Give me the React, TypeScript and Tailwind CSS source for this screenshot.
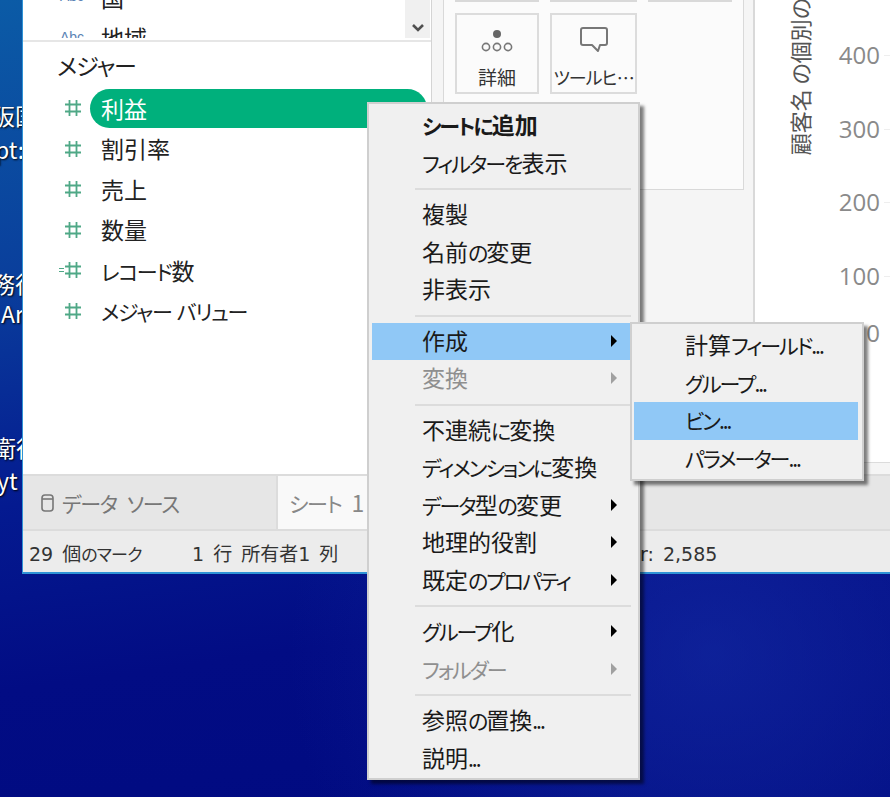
import React from "react";

const jp = "font-['Noto_Sans_CJK_JP','Liberation_Sans',sans-serif] [font-feature-settings:'palt']";
const status = "font-['DejaVu_Sans','Noto_Sans_CJK_JP',sans-serif] [font-feature-settings:'palt']";
const desk = "absolute text-[23px] leading-[30px] text-white [text-shadow:1px_1px_2px_#000]";

const measures = ["利益", "割引率", "売上", "数量", "レコード数", "メジャー バリュー"];

type Item = { label?: string; bold?: boolean; arrow?: boolean; off?: boolean; on?: boolean; sep?: boolean };

const menu: Item[] = [
  { label: "シートに追加", bold: true },
  { label: "フィルターを表示" },
  { sep: true },
  { label: "複製" },
  { label: "名前の変更" },
  { label: "非表示" },
  { sep: true },
  { label: "作成", arrow: true, on: true },
  { label: "変換", arrow: true, off: true },
  { sep: true },
  { label: "不連続に変換" },
  { label: "ディメンションに変換" },
  { label: "データ型の変更", arrow: true },
  { label: "地理的役割", arrow: true },
  { label: "既定のプロパティ", arrow: true },
  { sep: true },
  { label: "グループ化", arrow: true },
  { label: "フォルダー", arrow: true, off: true },
  { sep: true },
  { label: "参照の置換..." },
  { label: "説明..." },
];

const subMenu = ["計算フィールド...", "グループ...", "ビン...", "パラメーター..."];

// the original UI font has much narrower kana than kanji, so kana runs get tightened
function Narrow({ text, kana = "text-[21px] tracking-[-2px]" }: { text: string; kana?: string }) {
  const parts = text.split(/([\u3040-\u30ff.]+)/);
  return (
    <>
      {parts.map((p, i) => (i % 2 === 1 ? <span key={i} className={kana}>{p}</span> : <span key={i}>{p}</span>))}
    </>
  );
}

function HashIcon() {
  return (
    <svg width="16" height="16" viewBox="0 0 16 16" fill="none" stroke="#4fa886" strokeWidth="1.8">
      <path d="M4.5 0v16M11.5 0v16M0 4.5h16M0 11.5h16" />
    </svg>
  );
}

function MenuArrow({ off }: { off?: boolean }) {
  return (
    <svg width="8" height="12" viewBox="0 0 8 12" className="absolute left-[238px] top-[12px]">
      <path d="M1 0l6 6-6 6z" fill={off ? "#a0a0a0" : "#000000"} />
    </svg>
  );
}

export default function App() {
  return (
    <div className={`relative w-[890px] h-[797px] overflow-hidden bg-[radial-gradient(ellipse_at_80%_82%,rgba(24,50,170,0.55),transparent_42%),linear-gradient(172deg,#0b5ba6_0%,#0a3f9c_30%,#041a90_55%,#020c84_75%,#000a80_100%)] ${jp}`}>
      {/* desktop icon labels behind the window */}
      <div className={`${desk} left-[-8px] top-[100px]`}>阪国</div>
      <div className={`${desk} left-[-5px] top-[134px]`}>pt:</div>
      <div className={`${desk} left-[-8px] top-[268px]`}>務行</div>
      <div className={`${desk} left-[1px] top-[298px]`}>Ar</div>
      <div className={`${desk} left-[-7px] top-[432px]`}>衛行</div>
      <div className={`${desk} left-[-3px] top-[465px]`}>yt</div>

      {/* app window */}
      <div className="absolute left-[22px] top-0 right-0 h-[574px] flex flex-col border-l border-b-2 border-[#2f93d6] bg-white">
        <div className="flex h-[474px] shrink-0">
          {/* data pane */}
          <div className="w-[409px] shrink-0 border-r border-[#d4d4d4] bg-white">
            <div className="flex h-[38px] overflow-hidden">
              <div className="flex-1 mt-[-23.5px]">
                {["国", "地域"].map((d) => (
                  <div key={d} className="flex items-center h-[40.5px] text-[23px] text-[#222]">
                    <span className="w-[37px] ml-[37px] text-[14px] text-[#5a82b4] font-['Liberation_Sans',sans-serif]">Abc</span>
                    <span className="ml-[4px]">{d}</span>
                  </div>
                ))}
              </div>
              <div className="w-[25px] mr-[1px] bg-[#f0f0f0] flex items-end justify-center pb-[3px]">
                <svg width="14" height="14" viewBox="0 0 14 14" fill="none" stroke="#505050" strokeWidth="2.6">
                  <path d="M2 4l5 5 5-5" />
                </svg>
              </div>
            </div>
            <div className="h-[4px] border-b-2 border-[#e6e6e6]" />
            <div className="h-[46px] pl-[34px] flex items-center text-[23px] tracking-[-1px] text-[#222]">メジャー</div>
            {measures.map((m, i) => (
              <div key={m} className="flex items-center h-[40.5px]">
                <div className="w-[67px] pr-[9px] flex items-center justify-end">
                  {m === "レコード数" && <span className="w-[5px] h-[4px] mr-[1px] border-y border-[#4fa886]" />}
                  <HashIcon />
                </div>
                <div className={`flex items-baseline whitespace-pre w-[337px] h-[39px] px-[11px] rounded-full text-[23px] leading-[39px] ${i === 0 ? "bg-[#00b07c] text-white" : "text-[#222]"}`}>
                  <span><Narrow text={m} kana="text-[21px] tracking-[-1.3px]" /></span>
                </div>
              </div>
            ))}
          </div>

          {/* shelves */}
          <div className="w-[323px] shrink-0 border-r-2 border-[#d9d9d9] bg-[#f5f5f5] pl-[11px]">
            <div className="w-[301px] h-[190px] border-x border-b border-[#d9d9d9] bg-[#fbfbfb] pl-[11px]">
              <div className="flex gap-[11px] h-[2px]">
                <div className="w-[84px] border-b-2 border-[#d9d9d9]" />
                <div className="w-[87px] border-b-2 border-[#d9d9d9]" />
                <div className="w-[84px] border-b-2 border-[#d9d9d9]" />
              </div>
              <div className="flex gap-[11px] mt-[11px]">
                <div className="w-[84px] h-[81px] border-2 border-[#dcdcdc] flex flex-col items-center">
                  <svg width="34" height="26" viewBox="0 0 34 26" className="mt-[13px]" fill="none" stroke="#777" strokeWidth="1.6">
                    <circle cx="17" cy="6" r="4" fill="#666" stroke="none" />
                    <circle cx="6" cy="19" r="3.6" />
                    <circle cx="17" cy="19" r="3.6" />
                    <circle cx="28" cy="19" r="3.6" />
                  </svg>
                  <span className="mt-[9px] text-[19px] leading-[28px] text-[#333]">詳細</span>
                </div>
                <div className="w-[87px] h-[81px] border-2 border-[#dcdcdc] flex flex-col items-center">
                  <svg width="30" height="28" viewBox="0 0 30 28" className="mt-[11px]" fill="none" stroke="#777" strokeWidth="2" strokeLinejoin="round">
                    <path d="M4 2h22a2 2 0 0 1 2 2v13a2 2 0 0 1-2 2h-5l-2 6-6-6H4a2 2 0 0 1-2-2V4a2 2 0 0 1 2-2z" />
                  </svg>
                  <span className="mt-[9px] text-[18px] leading-[28px] tracking-[-1px] text-[#333] whitespace-nowrap">ツールヒ…</span>
                </div>
              </div>
            </div>
          </div>

          {/* view */}
          <div className="flex-1 min-w-0 flex flex-col bg-[#f5f5f5]">
            <div className="h-[463px] border-b border-[#dcdcdc] bg-white flex overflow-hidden">
              <div className="w-[58px] h-[155px] flex items-end justify-center pl-[29px] shrink-0">
                <span className="[writing-mode:vertical-rl] [text-orientation:sideways] rotate-180 text-[22px] leading-[26px] text-[#555] whitespace-nowrap">顧客名 の個別の数</span>
              </div>
              <div className="w-[67px] shrink-0 pt-[38px] text-right text-[24px] leading-[34px] text-[#8a8a8a] font-['Open_Sans',sans-serif]">
                <div className="h-[73.5px]">400</div>
                <div className="h-[73.5px]">300</div>
                <div className="h-[73.5px]">200</div>
                <div className="h-[57px]">100</div>
                <div>0</div>
              </div>
              <div className="pt-[38px] pl-[4px] w-[10px] shrink-0">
                {[0, 1, 2, 3].map((t) => (
                  <div key={t} className="h-[73.5px] pt-[17px]">
                    <div className="h-px bg-[#eeeeee]" />
                  </div>
                ))}
              </div>
            </div>
          </div>
        </div>

        {/* tabs */}
        <div className="flex h-[57px] shrink-0 border-t-2 border-b-2 border-[#dcdcdc] bg-[#e6e6e6] text-[23px] text-[#777] [word-spacing:5px]">
          <div className="w-[255px] border-r-2 border-[#dcdcdc] flex items-center pl-[18px] whitespace-pre">
            <svg width="13" height="18" viewBox="0 0 13 18" fill="none" stroke="#777" strokeWidth="1.6" className="mr-[8px]">
              <rect x="1" y="1" width="11" height="16" rx="3" />
              <path d="M1 5h11" />
            </svg>
            <span><Narrow text="データ ソース" kana="text-[21px] tracking-[-1.3px]" /></span>
          </div>
          <div className="w-[362px] bg-[#f9f9f9] flex items-center pl-[11px] text-[#888] whitespace-pre">
            <span><Narrow text="シート 1" kana="text-[21px] tracking-[-1.3px]" /></span>
          </div>
        </div>

        {/* status bar */}
        <div className={`flex-1 flex items-center pt-[5px] bg-[#ececec] text-[19px] text-[#333] [word-spacing:3px] ${status}`}>
          <span className="ml-[6px] w-[163px] whitespace-pre"><Narrow text="29 個のマーク" kana="text-[17px] tracking-[-0.8px]" /></span>
          <span className="w-[448px] whitespace-pre">1 行 所有者1 列</span>
          <span>r: 2,585</span>
        </div>
      </div>

      {/* context menu */}
      <div className="absolute left-[367px] top-[102px] w-[273px] pt-[3px] pb-[1px] border-2 border-[#cfcfcf] bg-[#f0f0f0] shadow-[4px_4px_3px_rgba(0,0,0,0.5)] text-[23px] text-[#1a1a1a]">
        {menu.map((item, i) =>
          item.sep ? (
            <div key={i} className="h-[14px] flex items-center pl-[46px] pr-[7px]">
              <div className="w-full h-[2px] bg-[#dcdcdc]" />
            </div>
          ) : (
            <div
              key={i}
              className={`relative flex items-baseline h-[37.5px] leading-[35px] ml-[3px] pl-[50px] whitespace-pre ${item.on ? "bg-[#90c8f6]" : ""} ${item.off ? "text-[#8f8f8f]" : ""} ${item.bold ? "font-bold" : ""}`}
            >
              <span><Narrow text={item.label ?? ""} /></span>
              {item.arrow && <MenuArrow off={item.off} />}
            </div>
          )
        )}
      </div>

      {/* submenu */}
      <div className="absolute left-[630px] top-[322px] w-[234px] pt-[3px] pb-[2px] border-2 border-[#cfcfcf] bg-[#f0f0f0] shadow-[4px_4px_3px_rgba(0,0,0,0.5)] text-[23px] text-[#1a1a1a]">
        {subMenu.map((s) => (
          <div key={s} className={`flex items-baseline h-[37.5px] leading-[35px] ml-[2px] mr-[4px] pl-[51px] whitespace-pre ${s === "ビン..." ? "bg-[#90c8f6]" : ""}`}>
            <span><Narrow text={s} /></span>
          </div>
        ))}
      </div>
    </div>
  );
}
